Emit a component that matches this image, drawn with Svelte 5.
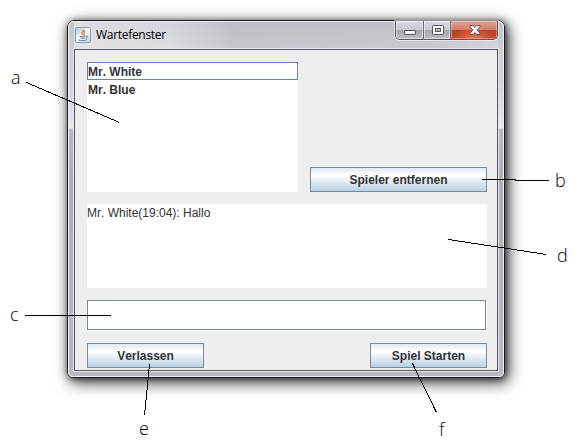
<script>
  const players = ['Mr. White', 'Mr. Blue'];
  const labels = [
    { t: 'a', x: 11, y: 84 },
    { t: 'b', x: 555, y: 187 },
    { t: 'c', x: 10, y: 321 },
    { t: 'd', x: 557, y: 262 },
    { t: 'e', x: 139, y: 435 },
    { t: 'f', x: 439, y: 436 }
  ];
  const lines = [
    '26,82 119,122',
    '481,179 515,179 515,180 548,180',
    '24,315 110,315',
    '448,239 546,254',
    '149,364 144,415',
    '412,363 436,412'
  ];
</script>

<div class="stage">
  <section class="window">
    <div class="glass">
      <header>
        <svg class="java" width="16" height="16" viewBox="0 0 16 16">
          <defs>
            <linearGradient id="jbg" x2="1" y2="1">
              <stop stop-color="#a3bccf" />
              <stop offset=".45" stop-color="#f8fafb" />
              <stop offset="1" stop-color="#c3d3de" />
            </linearGradient>
          </defs>
          <rect x=".5" y=".5" width="15" height="15" rx="1" fill="url(#jbg)" stroke="#8ea1b0" />
          <path d="M9 2.300c.4 1.700-2.800 2.400-2 4.200L8 8M10.500 4.300C8.300 5.200 8.700 6 9 6.500c.3.600 0 1.100-.4 1.500" fill="none" stroke="#ee7d22" stroke-width="1.300" />
          <path d="M4.500 9.300h6M5.300 11h4.700M11 9c2.300-.4 1.800 1.700-.3 2.300M3.500 13c2 1 7.500.8 8.700-.4" fill="none" stroke="#5d83a1" />
        </svg>
        <span class="title">Wartefenster</span>
        <div class="controls">
          <button aria-label="Minimieren" class="min">
            <svg width="12" height="5"><rect x=".5" y=".5" width="11" height="4" rx=".5" fill="#fff" stroke="#535666" /></svg>
          </button>
          <button aria-label="Maximieren" class="max">
            <svg width="12" height="10"><rect x=".5" y=".5" width="11" height="9" rx=".7" fill="#fff" stroke="#535666" /><rect x="3.500" y="3.500" width="5" height="3" fill="#b9bbc3" stroke="#535666" /></svg>
          </button>
          <button aria-label="Schließen" class="close">
            <svg width="12" height="10"><path d="M1 .5h3.200L6 2.500 7.800.500H11v1L8.300 5 11 8.500v1H7.800L6 7.500l-1.800 2H1v-1L3.700 5 1 1.500z" fill="#fff" stroke="#535666" /></svg>
          </button>
        </div>
      </header>
      <main>
        <div class="top">
          <ul>
            {#each players as p, i}
              <li class:focused={i === 0}>{p}</li>
            {/each}
          </ul>
          <button class="metal wide">Spieler entfernen</button>
        </div>
        <div class="chat">Mr. White(19:04): Hallo</div>
        <div class="field"></div>
        <div class="bottom">
          <button class="metal">Verlassen</button>
          <button class="metal">Spiel Starten</button>
        </div>
      </main>
    </div>
  </section>
  <svg class="notes" width="578" height="446">
    {#each lines as l}
      <polyline points={l} />
    {/each}
    {#each labels as l}
      <text x={l.x} y={l.y}>{l.t}</text>
    {/each}
  </svg>
</div>

<style>
  :global(body) { margin: 0; background: #fff; }
  * { box-sizing: border-box; }
  .stage {
    position: relative;
    width: 578px;
    height: 446px;
    padding: 20px 0 0 67px;
    overflow: hidden;
    font-family: 'Liberation Sans', sans-serif;
  }
  .window {
    width: 438px;
    height: 358px;
    border: 1px solid #1c1d20;
    border-radius: 7px 7px 6px 6px;
    box-shadow: 3px 4px 15px 1px rgba(0, 0, 0, .7), 1px 1px 6px rgba(0, 0, 0, .6);
  }
  .glass {
    height: 356px;
    padding: 0 5px;
    border: 1px solid #eceef2;
    border-radius: 6px 6px 5px 5px;
    background: linear-gradient(#c2c4ca 0, #cccfd4 28px, #d0d2d8 60px, #e9eaee 106px, #b9bbc3 107px, #adafb8 160px, #b8bac3 355px);
  }
  header {
    display: flex;
    align-items: flex-start;
    height: 27px;
    padding: 0 0 0 1px;
    background: linear-gradient(90deg, rgba(255, 255, 255, .42), rgba(255, 255, 255, .3) 95px, rgba(180, 182, 189, .3) 160px, rgba(190, 192, 199, .3) 85%, rgba(230, 231, 235, .3));
  }
  .java { margin: 5px 5px 0 0; }
  .title {
    padding-top: 4px;
    font: 12px/17px 'Open Sans', sans-serif;
    letter-spacing: -.3px;
    color: #000;
  }
  .controls {
    display: flex;
    width: 103px;
    height: 19px;
    margin: -1px 0 0 auto;
    border: 1px solid #55575e;
    border-top: 0;
    border-radius: 0 0 5px 5px;
    overflow: hidden;
    box-shadow: 0 0 0 1px rgba(255, 255, 255, .55);
  }
  .controls button {
    display: flex;
    flex: none;
    align-items: center;
    justify-content: center;
    height: 18px;
    padding: 0;
    border: 0;
    border-right: 1px solid #696b72;
    background: linear-gradient(#d9dadd, #c6c8cc 50%, #a3a5ac 51%, #bcbec3);
    box-shadow: inset 0 0 0 1px rgba(255, 255, 255, .5);
  }
  .controls .min { width: 28px; padding: 5px 0 0 1px; }
  .controls .max { width: 27px; padding-left: 1px; }
  .controls .close {
    width: 46px;
    padding-left: 2px;
    border: 0;
    background: radial-gradient(ellipse at 50% 110%, rgba(245, 140, 90, .7), transparent 60%), linear-gradient(#e0a598, #d37a68 48%, #bf3d22 51%, #c34a2e);
    box-shadow: inset 0 0 0 1px rgba(255, 210, 195, .45);
  }
  main {
    width: 424px;
    height: 322px;
    padding: 12px 9px 2px 12px;
    border: 1px solid #55585f;
    background: #eee;
    box-shadow: 0 0 0 1px #e4e6eb;
  }
  .top {
    display: flex;
    align-items: flex-end;
    justify-content: space-between;
    width: 400px;
    height: 130px;
  }
  ul {
    width: 211px;
    height: 130px;
    margin: 0;
    padding: 0;
    list-style: none;
    background: #fff;
  }
  li {
    height: 18px;
    padding-left: 1px;
    border: 1px solid transparent;
    border-left-width: 0;
    font: bold 12px/19px 'Liberation Sans', sans-serif;
    font-kerning: none;
    color: #333;
  }
  li.focused { padding-left: 0; border: 1px solid #6382bf; }
  .metal {
    width: 117px;
    height: 25px;
    padding: 1px 0 0;
    border: 1px solid #7a8a99;
    background: linear-gradient(#dde8f3, #fff 30%, #fff 34%, #b8cfe5);
    font: bold 12px/23px 'Liberation Sans', sans-serif;
    font-kerning: none;
    color: #333;
  }
  .wide { width: 177px; }
  .chat {
    width: 400px;
    height: 84px;
    margin-top: 12px;
    background: #fff;
    font-size: 12px;
    line-height: 19px;
    font-kerning: none;
    color: #333;
  }
  .field {
    width: 399px;
    height: 30px;
    margin-top: 12px;
    border: 1px solid #7a8a99;
    background: #fff;
    box-shadow: 1px 1px 0 #fff;
  }
  .bottom {
    display: flex;
    justify-content: space-between;
    width: 400px;
    margin-top: 13px;
  }
  .notes { position: absolute; left: 0; top: 0; pointer-events: none; }
  polyline {
    fill: none;
    stroke: #000;
    stroke-width: 1;
    shape-rendering: crispEdges;
    transform: translate(.5px, .5px);
  }
  text { font: 300 18px 'Open Sans', sans-serif; fill: #000; }
</style>
